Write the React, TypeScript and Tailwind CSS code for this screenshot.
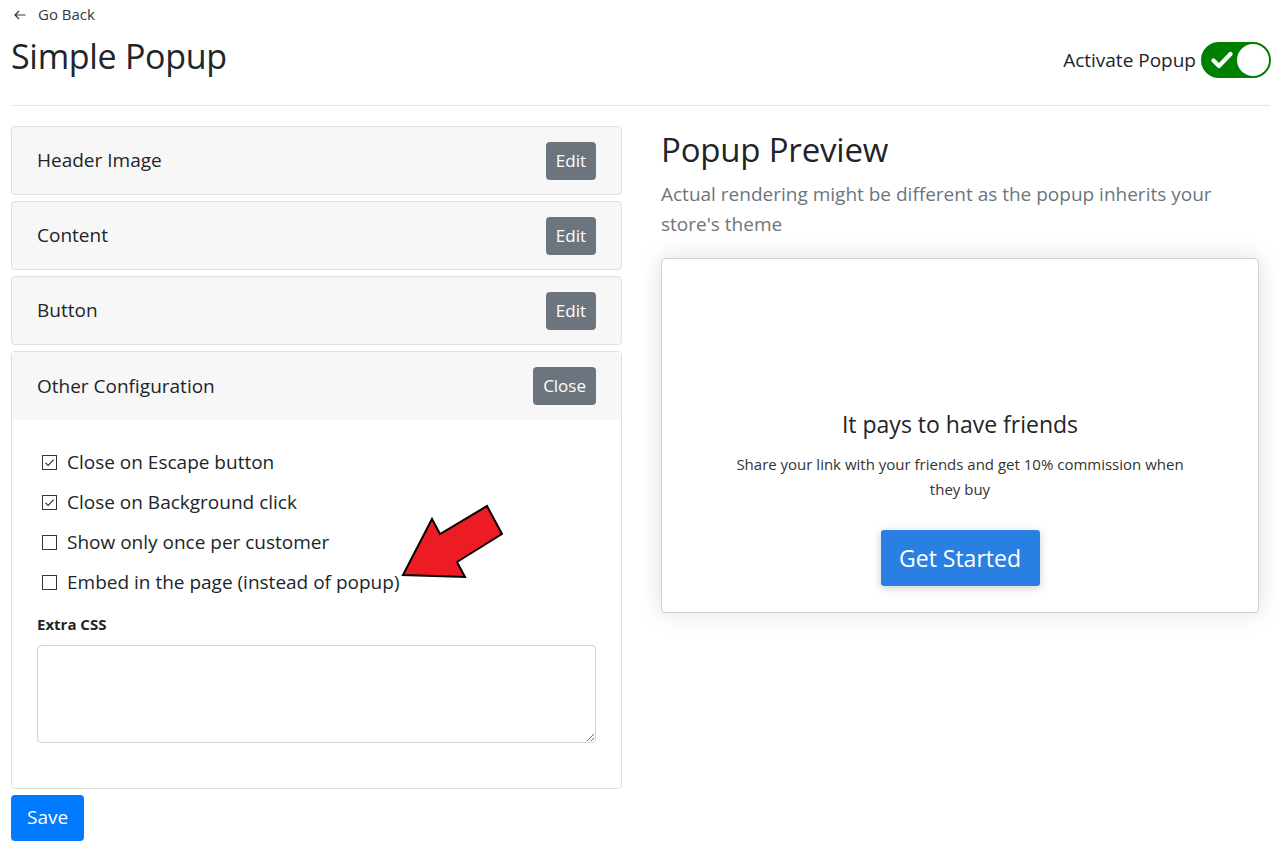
import { useState } from 'react';

const sections = ['Header Image', 'Content', 'Button'];

const options = [
  { label: 'Close on Escape button', checked: true },
  { label: 'Close on Background click', checked: true },
  { label: 'Show only once per customer', checked: false },
  { label: 'Embed in the page (instead of popup)', checked: false },
];

function Toggle() {
  return (
    <div className="flex h-[36px] w-[70px] items-center justify-between rounded-full border-2 border-[#008000] bg-[#008000] pl-[8px]">
      <svg width="22" height="18" viewBox="0 0 22 18" fill="none">
        <path
          d="M2.5 9.5l5.5 5.5L19.5 3"
          stroke="#fff"
          strokeWidth={4.2}
          strokeLinecap="round"
          strokeLinejoin="round"
        />
      </svg>
      <div className="h-[32px] w-[32px] rounded-full bg-white" />
    </div>
  );
}

function Checkbox({ checked }: { checked: boolean }) {
  return (
    <span className="flex h-[15px] w-[15px] shrink-0 items-center justify-center border border-[#333] bg-white">
      {checked && (
        <svg width="11" height="11" viewBox="0 0 11 11" fill="none">
          <path d="M1.5 5.8l2.7 2.7L9.6 2.6" stroke="#333" strokeWidth={1.2} />
        </svg>
      )}
    </span>
  );
}

export default function App() {
  const [opts, setOpts] = useState(options);

  return (
    <div
      className="relative min-h-[851px] bg-white px-[11px] text-[#212529]"
      style={{ fontFamily: '"Open Sans", "Noto Sans", sans-serif' }}
    >
      {/* Header */}
      <div className="flex items-center gap-[12px] pt-[4px] pl-[3px] text-[15px] leading-[20px] text-[#343a40]">
        <svg width="12" height="10" viewBox="0 0 12 10" fill="none" className="mt-[2px]">
          <path d="M11.5 5H1.2M5 1L1 5l4 4" stroke="#343a40" strokeWidth={1.2} />
        </svg>
        <span>Go Back</span>
      </div>
      <div className="flex items-center justify-between pt-[9px] pb-[26px]">
        <h1 className="text-[34px] leading-[46px] tracking-[-0.3px]">Simple Popup</h1>
        <div className="mr-[-2px] mt-[8px] flex items-center gap-[5px]">
          <span className="mt-[1px] text-[19px]">Activate Popup</span>
          <Toggle />
        </div>
      </div>
      <div className="h-px w-[1259px] bg-[#e5e5e5]" />

      <div className="grid grid-cols-[611px_598px] gap-[39px] pt-[20px]">
        {/* Left column */}
        <div className="flex flex-col">
          <div className="flex flex-col gap-[6px]">
            {sections.map((s) => (
              <div
                key={s}
                className="flex h-[69px] items-center justify-between rounded-[4px] border border-[#dfdfdf] bg-[#f7f7f7] pr-[25px] pl-[25px]"
              >
                <span className="text-[19px]">{s}</span>
                <button className="h-[38px] rounded-[4px] bg-[#6c757d] px-[10px] text-[17px] text-white">
                  Edit
                </button>
              </div>
            ))}
            <div className="rounded-[4px] border border-[#dfdfdf]">
              <div className="flex h-[68px] items-center justify-between bg-[#f7f7f7] pr-[25px] pl-[25px]">
                <span className="text-[19px]">Other Configuration</span>
                <button className="h-[38px] rounded-[4px] bg-[#6c757d] px-[10px] text-[17px] text-white">
                  Close
                </button>
              </div>
              <div className="px-[25px] pt-[22px] pb-[45px]">
                <div className="flex flex-col">
                  {opts.map((o, i) => (
                    <label
                      key={o.label}
                      className="flex h-[40px] items-center gap-[10px] pl-[5px] text-[19px]"
                      onClick={() =>
                        setOpts(opts.map((x, j) => (j === i ? { ...x, checked: !x.checked } : x)))
                      }
                    >
                      <Checkbox checked={o.checked} />
                      <span>{o.label}</span>
                    </label>
                  ))}
                </div>
                <div className="pt-[11px] text-[15px] font-bold">Extra CSS</div>
                <textarea className="mt-[9px] block h-[98px] w-full resize-y rounded-[4px] border border-[#ced4da] bg-white" />
              </div>
            </div>
          </div>
          <div className="pt-[6px]">
            <button className="h-[46px] rounded-[4px] bg-[#007bff] px-[16px] text-[19px] text-white">
              Save
            </button>
          </div>
        </div>

        {/* Right column */}
        <div className="pt-[2px]">
          <h2 className="text-[33px] leading-[44px] tracking-[-0.2px]">Popup Preview</h2>
          <p className="mt-[7px] pr-[40px] text-[19px] leading-[30px] text-[#6c757d]">
            Actual rendering might be different as the popup inherits your store's theme
          </p>
          <div className="mt-[19px] flex h-[355px] flex-col items-center rounded-[4px] border border-[#cfcfcf] bg-white pt-[149px] shadow-[0_0_24px_rgba(0,0,0,0.13)]">
            <div className="text-[23px] leading-[32px]">It pays to have friends</div>
            <p className="mt-[12px] max-w-[470px] text-center text-[15px] leading-[25px] text-[#333]">
              Share your link with your friends and get 10% commission when they buy
            </p>
            <button className="mt-[28px] h-[56px] w-[159px] rounded-[3px] bg-[#2a80e2] text-[23px] text-white shadow-[0_2px_10px_rgba(0,0,0,0.2)]">
              Get Started
            </button>
          </div>
        </div>
      </div>

      {/* annotation arrow */}
      <svg className="pointer-events-none absolute top-0 left-0" width="1280" height="851">
        <polygon
          points="403,575 432,519 440,534 487,506 502,534 457,562 465,577"
          fill="#ed1c24"
          stroke="#000"
          strokeWidth="2"
          strokeLinejoin="miter"
        />
      </svg>
    </div>
  );
}
